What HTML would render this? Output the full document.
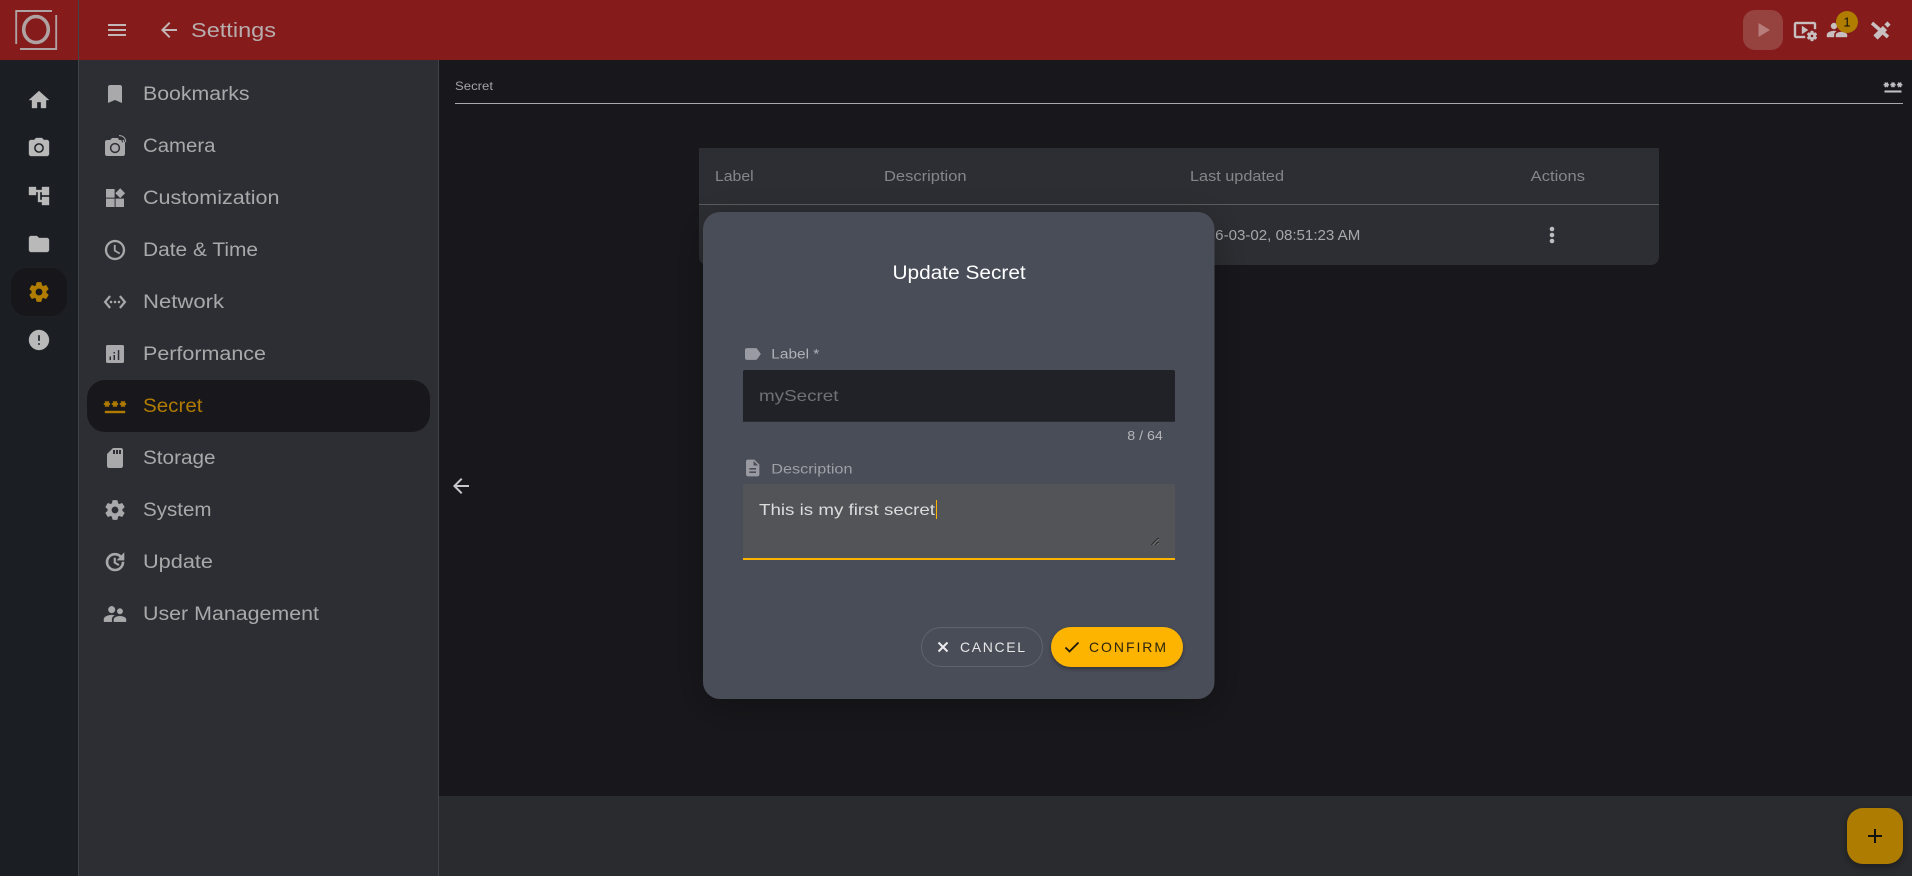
<!DOCTYPE html>
<html lang="en">
<head>
<meta charset="utf-8">
<title>Settings</title>
<style>
html,body{margin:0;padding:0;width:1912px;height:876px;overflow:hidden;background:#18181c}
svg{display:block}
text{font-family:"Liberation Sans",sans-serif}
.nav{font-size:19px;fill:#a9a9ab}
.th{font-size:14.5px;fill:#85868a}
</style>
</head>
<body>
<svg xmlns="http://www.w3.org/2000/svg" width="1912" height="876" viewBox="0 0 1912 876">
<defs>
<path id="gear" d="M19.14 12.94c.04-.3.06-.61.06-.94 0-.32-.02-.64-.07-.94l2.03-1.58c.18-.14.23-.41.12-.61l-1.92-3.32c-.12-.22-.37-.29-.59-.22l-2.39.96c-.5-.38-1.03-.7-1.62-.94l-.36-2.54c-.04-.24-.24-.41-.48-.41h-3.84c-.24 0-.43.17-.47.41l-.36 2.54c-.59.24-1.13.57-1.62.94l-2.39-.96c-.22-.08-.47 0-.59.22L2.74 8.87c-.12.21-.08.47.12.61l2.03 1.58c-.05.3-.09.63-.09.94s.02.64.07.94l-2.03 1.58c-.18.14-.23.41-.12.61l1.92 3.32c.12.22.37.29.59.22l2.39-.96c.5.38 1.03.7 1.62.94l.36 2.54c.05.24.24.41.48.41h3.84c.24 0 .44-.17.47-.41l.36-2.54c.59-.24 1.13-.56 1.62-.94l2.39.96c.22.08.47 0 .59-.22l1.92-3.32c.12-.22.07-.47-.12-.61l-2.01-1.58zM12 15.6c-1.98 0-3.6-1.62-3.6-3.6s1.62-3.6 3.6-3.6 3.6 1.62 3.6 3.6-1.62 3.6-3.6 3.6z"/>
<path id="pass" d="M2 17h20v2H2zm1.15-4.05L4 11.47l.85 1.48 1.3-.75-.85-1.48H7v-1.5H5.3l.85-1.47L4.85 7 4 8.47 3.15 7l-1.3.75.85 1.47H1v1.5h1.7l-.85 1.48 1.3.75zm6.7-.75l1.3.75.85-1.48.85 1.48 1.3-.75-.85-1.48H15v-1.5h-1.7l.85-1.47-1.3-.75L12 8.47 11.15 7l-1.3.75.85 1.47H9v1.5h1.7l-.85 1.48zM23 9.22h-1.7l.85-1.47-1.3-.75L20 8.47 19.15 7l-1.3.75.85 1.47H17v1.5h1.7l-.85 1.48 1.3.75.85-1.48.85 1.48 1.3-.75-.85-1.48H23v-1.5z"/>
<path id="sup" d="M16.5 12c1.38 0 2.49-1.12 2.49-2.5S17.88 7 16.5 7C15.12 7 14 8.12 14 9.5s1.12 2.5 2.5 2.5zM9 11c1.66 0 2.99-1.34 2.99-3S10.66 5 9 5C7.34 5 6 6.34 6 8s1.34 3 3 3zm7.5 3c-1.83 0-5.5.92-5.5 2.75V19h11v-2.25c0-1.83-3.67-2.75-5.5-2.75zM9 13c-2.33 0-7 1.17-7 3.5V19h7v-2.25c0-.85.33-2.34 2.37-3.47C10.5 13.1 9.66 13 9 13z"/>
<filter id="ms" x="-20%" y="-20%" width="140%" height="140%"><feDropShadow dx="0" dy="8" stdDeviation="18" flood-color="#000" flood-opacity=".28"/></filter>
<filter id="bs" x="-20%" y="-40%" width="140%" height="180%"><feDropShadow dx="0" dy="2" stdDeviation="2" flood-color="#000" flood-opacity=".35"/></filter>
<filter id="fs" x="-30%" y="-30%" width="160%" height="160%"><feDropShadow dx="0" dy="3" stdDeviation="4" flood-color="#000" flood-opacity=".35"/></filter>
</defs>

<!-- backgrounds -->
<rect width="1912" height="876" fill="#18181c"/>
<rect x="0" y="60" width="78" height="816" fill="#1b1f24"/>
<rect x="79" y="60" width="359" height="816" fill="#2d2e33"/>
<rect x="438" y="60" width="1" height="816" fill="#424348"/>
<rect x="439" y="796" width="1473" height="80" fill="#292b2e"/>
<rect x="0" y="0" width="1912" height="60" fill="#851b1b"/>
<rect x="78" y="0" width="1" height="876" fill="#404448"/>

<!-- logo -->
<g fill="none" stroke="#aea2a2" stroke-width="1.9">
<path d="M16.200 44V11H52"/>
<path d="M56.200 15V49H20"/>
<ellipse cx="36" cy="29.500" rx="12.300" ry="13" stroke-width="3.600"/>
</g>

<!-- header left -->
<path d="M108 24h18v2h-18zM108 29h18v2h-18zM108 34h18v2h-18z" fill="#c2b6b6"/>
<g transform="translate(157 18)"><path fill="#c2b6b6" d="M20 11H7.830l5.590-5.590L12 4l-8 8 8 8 1.410-1.410L7.830 13H20v-2z"/></g>
<text x="191" y="37" font-size="20.500" fill="#b8adad" textLength="85" lengthAdjust="spacingAndGlyphs">Settings</text>

<!-- header right -->
<rect x="1743" y="10" width="40" height="40" rx="12" fill="#964340"/>
<path d="M1758.500 23l11.500 7-11.500 7z" fill="#b67d7a"/>
<g transform="translate(1793 18)" fill="#c8c0c0" stroke="#c8c0c0" stroke-width=".4"><path d="M3 6h18v5h2V6c0-1.100-.9-2-2-2H3c-1.100 0-2 .9-2 2v12c0 1.100.9 2 2 2h9v-2H3V6z"/><path d="M15 12l-6-4v8z"/><path d="M22.710 18.430c.03-.29.04-.58.01-.86l1.070-.85c.1-.08.12-.21.06-.32l-1.030-1.790c-.06-.11-.19-.15-.31-.11l-1.280.5c-.23-.17-.48-.31-.75-.42l-.2-1.360c-.02-.13-.12-.22-.25-.22h-2.070c-.12 0-.23.09-.25.21l-.2 1.360c-.26.11-.51.26-.74.42l-1.280-.5c-.12-.05-.25 0-.31.11l-1.030 1.790c-.06.11-.04.24.06.32l1.070.85c-.03.29-.04.58-.01.86l-1.070.85c-.1.08-.12.21-.06.32l1.030 1.790c.06.11.19.15.31.11l1.270-.5c.23.17.48.31.75.42l.2 1.360c.02.12.12.21.25.21h2.070c.12 0 .23-.09.25-.21l.2-1.360c.26-.11.51-.26.74-.42l1.280.5c.12.05.25 0 .31-.11l1.030-1.790c.06-.11.04-.24-.06-.32l-1.050-.85zM19 19.500c-.83 0-1.500-.67-1.500-1.500s.67-1.500 1.500-1.500 1.500.67 1.500 1.500-.67 1.500-1.500 1.500z"/></g>
<g transform="translate(1825 18)" fill="#c8c0c0" stroke="#c8c0c0" stroke-width=".4"><use href="#sup"/></g>
<circle cx="1847" cy="22" r="11" fill="#b07d00"/>
<text x="1847" y="26.500" font-size="13" fill="#111" text-anchor="middle">1</text>
<g stroke="#c8c0c0" fill="none">
<path d="M1872 23l16 14" stroke-width="3.500"/>
<path d="M1875.500 37.500l9.500-9.500" stroke-width="6"/>
<path d="M1886 26l3-3" stroke-width="4.500"/>
</g>

<!-- rail -->
<rect x="11" y="268" width="56" height="48" rx="16" fill="#17171b"/>
<g fill="#b9b9b9" stroke="#b9b9b9" stroke-width=".35">
<g transform="translate(27 88)"><path d="M10 20v-6h4v6h5v-8h3L12 3 2 12h3v8z"/></g>
<g transform="translate(27 136)"><circle cx="12" cy="12" r="3.200"/><path d="M9 2L7.170 4H4c-1.100 0-2 .9-2 2v12c0 1.100.9 2 2 2h16c1.100 0 2-.9 2-2V6c0-1.100-.9-2-2-2h-3.170L15 2H9zm3 15c-2.760 0-5-2.240-5-5s2.240-5 5-5 5 2.240 5 5-2.240 5-5 5z"/></g>
<g transform="translate(27 184)"><path d="M22 11V3h-7v3H9V3H2v8h7V8h2v10h4v3h7v-8h-7v3h-2V8h2v3z"/></g>
<g transform="translate(27 232)"><path d="M10 4H4c-1.100 0-1.990.9-1.990 2L2 18c0 1.100.9 2 2 2h16c1.100 0 2-.9 2-2V8c0-1.100-.9-2-2-2h-8l-2-2z"/></g>
<g transform="translate(27 328)"><path d="M12 2C6.480 2 2 6.480 2 12s4.480 10 10 10 10-4.480 10-10S17.520 2 12 2zm1 15h-2v-2h2v2zm0-4h-2V7h2v6z"/></g>
</g>
<g transform="translate(27 280)" fill="#b07d00" stroke="#b07d00" stroke-width=".5"><use href="#gear"/></g>

<!-- settings panel -->
<rect x="87" y="380" width="343" height="52" rx="18" fill="#18181c"/>
<g fill="#a9a9ab">
<g transform="translate(103 82)"><path d="M17 3H7c-1.100 0-2 .9-2 2v16l7-3 7 3V5c0-1.100-.9-2-2-2z"/></g>
<g transform="translate(103 134)"><path d="M9 4L7.200 6H4C2.900 6 2 6.900 2 8v12c0 1.100.9 2 2 2h16c1.100 0 2-.9 2-2V6h-6l-1-2H9z"/><circle cx="12" cy="14" r="4.400" fill="none" stroke="#2d2e33" stroke-width="1.500"/><path d="M15.500 4.400c2.300-.2 4 1.600 3.900 3.900M16 2.400c3.500-.3 6 2.400 5.800 5.800" fill="none" stroke="#2d2e33" stroke-width="1.100"/><path d="M16 1.600c3.900-.3 7 2.800 6.600 6.600" fill="none" stroke="#a9a9ab" stroke-width="1"/></g>
<g transform="translate(103 186)"><path d="M3 3h8.600v8.600H3zM3 12.600h8.600V21H3zM12.600 12.600H21V21h-8.400zM17.200 2.300l4.900 4.900-4.900 4.900-4.900-4.900z"/></g>
<g transform="translate(103 238)" stroke="#a9a9ab" stroke-width=".3"><path d="M11.990 2C6.470 2 2 6.480 2 12s4.470 10 9.990 10C17.520 22 22 17.520 22 12S17.520 2 11.990 2zM12 20c-4.420 0-8-3.580-8-8s3.580-8 8-8 8 3.580 8 8-3.580 8-8 8zm.5-13H11v6l5.250 3.150.75-1.230-4.500-2.670z"/></g>
<g transform="translate(103 290)" stroke="#a9a9ab" stroke-width=".3"><path d="M7.770 6.760L6.230 5.480.82 12l5.410 6.520 1.540-1.280L3.420 12l4.350-5.240zM7 13h2v-2H7v2zm10-2h-2v2h2v-2zm-6 2h2v-2h-2v2zm6.770-7.520l-1.540 1.280L20.580 12l-4.350 5.240 1.540 1.280L23.180 12l-5.410-6.520z"/></g>
<g transform="translate(103 342)"><path fill-rule="evenodd" d="M4.500 3h15A1.500 1.500 0 0121 4.500v15a1.500 1.500 0 01-1.500 1.500h-15A1.500 1.500 0 013 19.500v-15A1.500 1.500 0 014.500 3zM6.500 14.500v3.500H8v-3.500zM10.500 13v5H12v-5zM10.500 10v1.500H12V10zM14.800 8v10h1.500V8z"/></g>
<g transform="translate(103 446)"><path d="M18 2h-8L4.020 8 4 20c0 1.100.9 2 2 2h12c1.100 0 2-.9 2-2V4c0-1.100-.9-2-2-2zm-6 6h-2V4h2v4zm3 0h-2V4h2v4zm3 0h-2V4h2v4z"/></g>
<g transform="translate(103 498)" stroke="#a9a9ab" stroke-width=".5"><use href="#gear"/></g>
<g transform="translate(103 550)"><path d="M21 10.120h-6.780l2.740-2.820c-2.730-2.700-7.150-2.800-9.880-.1-2.730 2.710-2.730 7.080 0 9.790s7.150 2.710 9.880 0C18.320 15.650 19 14.080 19 12.100h2c0 1.980-.88 4.550-2.640 6.290-3.510 3.480-9.210 3.480-12.720 0-3.500-3.470-3.530-9.110-.02-12.580s9.140-3.470 12.650 0L21 3v7.120zM12.500 8v4.250l3.500 2.080-.72 1.210L11 13V8h1.500z" stroke="#a9a9ab" stroke-width=".6"/></g>
<g transform="translate(103 602)" stroke="#a9a9ab" stroke-width=".4"><g transform="translate(12 12) scale(1.1) translate(-12 -12)"><use href="#sup"/></g></g>
</g>
<g transform="translate(103 394)" fill="#b07b00" stroke="#b07b00" stroke-width=".4"><use href="#pass"/></g>

<text class="nav" x="143" y="100" textLength="106.500" lengthAdjust="spacingAndGlyphs">Bookmarks</text>
<text class="nav" x="143" y="152" textLength="72.500" lengthAdjust="spacingAndGlyphs">Camera</text>
<text class="nav" x="143" y="204" textLength="136.500" lengthAdjust="spacingAndGlyphs">Customization</text>
<text class="nav" x="143" y="256" textLength="115" lengthAdjust="spacingAndGlyphs">Date &amp; Time</text>
<text class="nav" x="143" y="308" textLength="81" lengthAdjust="spacingAndGlyphs">Network</text>
<text class="nav" x="143" y="360" textLength="123" lengthAdjust="spacingAndGlyphs">Performance</text>
<text class="nav" x="143" y="412" textLength="59.500" lengthAdjust="spacingAndGlyphs" style="fill:#b07b00">Secret</text>
<text class="nav" x="143" y="464" textLength="72.500" lengthAdjust="spacingAndGlyphs">Storage</text>
<text class="nav" x="143" y="516" textLength="68.500" lengthAdjust="spacingAndGlyphs">System</text>
<text class="nav" x="143" y="568" textLength="70" lengthAdjust="spacingAndGlyphs">Update</text>
<text class="nav" x="143" y="620" textLength="176" lengthAdjust="spacingAndGlyphs">User Management</text>

<!-- content header -->
<text x="455" y="90" font-size="11.500" fill="#a4a4a8" textLength="38" lengthAdjust="spacingAndGlyphs">Secret</text>
<rect x="455" y="103" width="1448" height="1" fill="#a9a9ad"/>
<g transform="translate(1883 76.500) scale(.8333)" fill="#c0c0c4" stroke="#c0c0c4" stroke-width=".5"><use href="#pass"/></g>
<g transform="translate(449 474)"><path fill="#c8c8cc" d="M20 11H7.830l5.590-5.590L12 4l-8 8 8 8 1.410-1.410L7.830 13H20v-2z"/></g>

<!-- table -->
<path d="M699 148H1659V257a8 8 0 0 1-8 8H707a8 8 0 0 1-8-8z" fill="#2d2e33"/>
<rect x="699" y="204" width="960" height="1" fill="#5a5c5f"/>
<text class="th" x="715" y="181" textLength="38.600" lengthAdjust="spacingAndGlyphs">Label</text>
<text class="th" x="884" y="181" textLength="82.600" lengthAdjust="spacingAndGlyphs">Description</text>
<text class="th" x="1190" y="181" textLength="94" lengthAdjust="spacingAndGlyphs">Last updated</text>
<text class="th" x="1530.700" y="181" textLength="54.300" lengthAdjust="spacingAndGlyphs">Actions</text>
<text x="1190" y="240" font-size="14.500" fill="#a8a8ac" textLength="170.300" lengthAdjust="spacingAndGlyphs">2026-03-02, 08:51:23 AM</text>
<g fill="#bdbdc0"><circle cx="1552" cy="229" r="2.300"/><circle cx="1552" cy="235" r="2.300"/><circle cx="1552" cy="241" r="2.300"/></g>

<!-- modal -->
<rect x="703" y="212" width="511.500" height="487" rx="17" fill="#494d58" filter="url(#ms)"/>
<text x="892.500" y="279" font-size="19" fill="#fff" textLength="133.200" lengthAdjust="spacingAndGlyphs">Update Secret</text>

<g transform="translate(742.500 344) scale(.8333)" fill="#9a9ba2"><path d="M17.630 5.840C17.270 5.330 16.670 5 16 5L5 5.010C3.900 5.010 3 5.900 3 7v10c0 1.100.9 1.990 2 1.990L16 19c.67 0 1.270-.33 1.630-.84L22 12l-4.370-6.160z"/></g>
<text x="771.300" y="358.500" font-size="13.500" fill="#b0b1b6" textLength="48" lengthAdjust="spacingAndGlyphs">Label *</text>
<path d="M743 372a2 2 0 0 1 2-2H1173a2 2 0 0 1 2 2V421.700H743z" fill="#212227"/>
<text x="759" y="401" font-size="16" fill="#707176" textLength="79.500" lengthAdjust="spacingAndGlyphs">mySecret</text>
<text x="1127.300" y="440" font-size="12.500" fill="#b5b6ba" textLength="35.500" lengthAdjust="spacingAndGlyphs">8 / 64</text>

<g transform="translate(742.700 458) scale(.8333)" fill="#9a9ba2"><path d="M14 2H6c-1.100 0-1.990.9-1.990 2L4 20c0 1.100.89 2 1.990 2H18c1.100 0 2-.9 2-2V8l-6-6zm2 16H8v-2h8v2zm0-4H8v-2h8v2zm-3-5V3.500L18.500 9H13z"/></g>
<text x="771.300" y="473.300" font-size="13.500" fill="#9fa0a6" textLength="81.200" lengthAdjust="spacingAndGlyphs">Description</text>
<path d="M743 486a2 2 0 0 1 2-2H1173a2 2 0 0 1 2 2V560H743z" fill="#535457"/>
<rect x="743" y="558" width="432" height="2" fill="#fdb400"/>
<text x="759" y="515" font-size="16" fill="#dcdcdc" textLength="176" lengthAdjust="spacingAndGlyphs">This is my first secret</text>
<rect x="936" y="500" width="1" height="19" fill="#fdb400"/>
<g stroke-width="1" fill="none"><path d="M1151.500 545l7-7M1155.500 545l3-3" stroke="#1e1e1e"/><path d="M1152.500 545l6-6M1156.500 545l2-2" stroke="#c8c8c8" stroke-width=".5"/></g>

<!-- buttons -->
<rect x="921.500" y="627.500" width="121" height="39" rx="19.500" fill="#494d58" stroke="#5f636c"/>
<path d="M938.500 642.500l9 9M947.500 642.500l-9 9" stroke="#ececec" stroke-width="2" fill="none"/>
<text x="960" y="652" font-size="14" fill="#e6e6e6" textLength="65" lengthAdjust="spacing">CANCEL</text>
<rect x="1051" y="627" width="132" height="40" rx="20" fill="#fdb400" filter="url(#bs)"/>
<path d="M1065.500 647.500l4 4 9-9" stroke="#1a1710" stroke-width="1.800" fill="none"/>
<text x="1089" y="652" font-size="14" fill="#2b2410" textLength="77" lengthAdjust="spacing">CONFIRM</text>

<!-- FAB -->
<rect x="1847" y="808" width="56" height="56" rx="16" fill="#ae7c00" filter="url(#fs)"/>
<path d="M1868 836h14M1875 829v14" stroke="#111" stroke-width="2" fill="none"/>
</svg>
</body>
</html>
